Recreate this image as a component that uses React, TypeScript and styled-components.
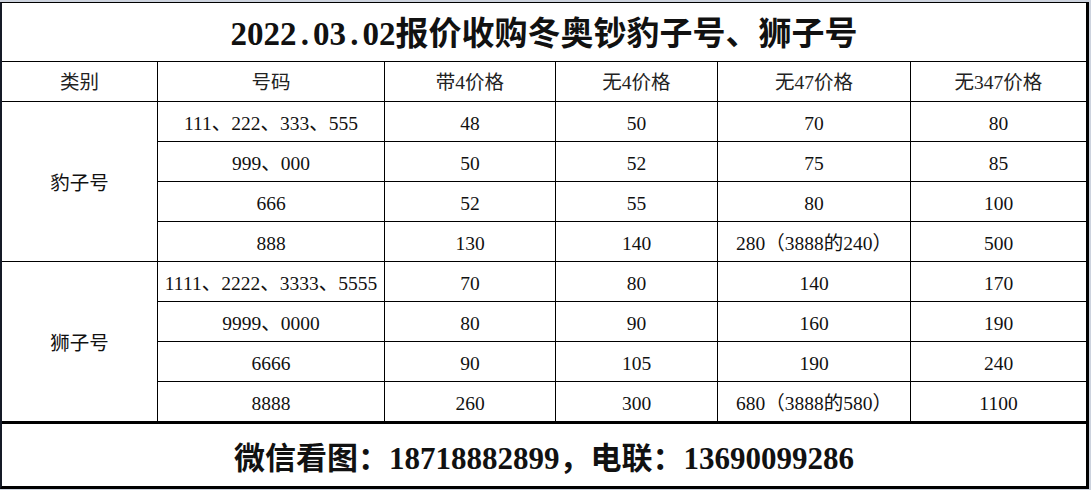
import React from "react";
import styled, { createGlobalStyle } from "styled-components";

const GlobalStyle = createGlobalStyle`
  html, body { margin: 0; padding: 0; background: #ffffff; }
  #root { width: 1091px; height: 490px; }
`;

const FONT = `"Liberation Serif", "Noto Sans CJK SC", serif`;

const Page = styled.div`
  width: 1091px;
  height: 490px;
  box-sizing: border-box;
  padding-top: 2px;
  background: #cdd3de;
  overflow: hidden;
`;

const Sheet = styled.div`
  width: 1089px;
  box-sizing: border-box;
  background: #ffffff;
  border-left: 2px solid #151a26;
  border-top: 1px solid #000;
  border-right: 3px solid #000;
  border-bottom: 3px solid #000;
  display: flex;
  flex-direction: column;
  font-family: ${FONT};
  color: #111;
`;

const Title = styled.div`
  height: 59px;
  border-bottom: 1px solid #000;
  display: flex;
  align-items: center;
  justify-content: center;
  font-size: 33px;
  font-weight: 700;
  line-height: 38px;
  padding-top: 3px;
  box-sizing: border-box;
`;

const TitleText = styled.span`
  white-space: nowrap;
`;

const Dot = styled.span`
  display: inline-block;
  width: 0.5em;
  text-align: center;
`;

const Grid = styled.div`
  display: grid;
  grid-template-columns: 155px 226px 170px 161px 192px 175px;
  grid-auto-rows: 39px;
  gap: 1px;
  background: #000;
  border-bottom: 3px solid #000;
`;

const Cell = styled.div<{ $span?: number; $shift?: number }>`
  background: #fff;
  display: flex;
  align-items: center;
  justify-content: center;
  box-sizing: border-box;
  font-size: 19.5px;
  line-height: 22px;
  white-space: nowrap;
  padding-top: ${(p) => p.$shift ?? 0}px;
  grid-row: ${(p) => (p.$span ? `span ${p.$span}` : "auto")};
`;

const HeadCell = styled(Cell)`
  color: #222;
`;

const Footer = styled.div`
  height: 62px;
  display: flex;
  align-items: center;
  justify-content: center;
  font-size: 31px;
  font-weight: 700;
`;

const headers = ["类别", "号码", "带4价格", "无4价格", "无47价格", "无347价格"];

const groups: { name: string; rows: string[][] }[] = [
  {
    name: "豹子号",
    rows: [
      ["111、222、333、555", "48", "50", "70", "80"],
      ["999、000", "50", "52", "75", "85"],
      ["666", "52", "55", "80", "100"],
      ["888", "130", "140", "280（3888的240）", "500"],
    ],
  },
  {
    name: "狮子号",
    rows: [
      ["1111、2222、3333、5555", "70", "80", "140", "170"],
      ["9999、0000", "80", "90", "160", "190"],
      ["6666", "90", "105", "190", "240"],
      ["8888", "260", "300", "680（3888的580）", "1100"],
    ],
  },
];

export default function App() {
  return (
    <>
      <GlobalStyle />
      <Page>
        <Sheet>
          <Title>
            <TitleText>
              2022<Dot>.</Dot>03<Dot>.</Dot>02报价收购冬奥钞豹子号、狮子号
            </TitleText>
          </Title>
          <Grid>
            {headers.map((h) => (
              <HeadCell key={h} $shift={2}>
                {h}
              </HeadCell>
            ))}
            {groups.map((g) => (
              <React.Fragment key={g.name}>
                <Cell $span={4} $shift={4}>
                  {g.name}
                </Cell>
                {g.rows.map((r, i) =>
                  r.map((v, j) => (
                    <Cell $shift={4} key={`${g.name}-${i}-${j}`}>
                      {v}
                    </Cell>
                  ))
                )}
              </React.Fragment>
            ))}
          </Grid>
          <Footer>微信看图：18718882899，电联：13690099286</Footer>
        </Sheet>
      </Page>
    </>
  );
}
